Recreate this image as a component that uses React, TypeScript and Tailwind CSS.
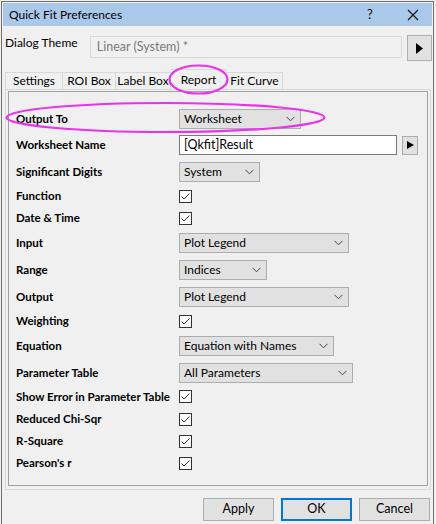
import React from "react";

const font = { fontFamily: 'Lato, "Noto Sans", sans-serif' };

function Chevron() {
  return (
    <svg width="9" height="6" viewBox="0 0 9 6" className="shrink-0">
      <path d="M0.5 0.8 L4.5 4.8 L8.5 0.8" fill="none" stroke="#444" strokeWidth="1" />
    </svg>
  );
}

function Combo({ w, text }: { w: string; text: string }) {
  return (
    <div className={`${w} h-[20px] flex items-center justify-between bg-[#e1e1e1] border border-[#adadad] pl-[4px] pr-[5px] text-[12px] text-black whitespace-nowrap`}>
      <span>{text}</span>
      <Chevron />
    </div>
  );
}

function Check() {
  return (
    <div className="w-[13px] h-[13px] bg-white border border-[#333] flex items-center justify-center">
      <svg width="11" height="11" viewBox="0 0 11 11">
        <path d="M1.5 5.5 L4 8 L9.5 2.5" fill="none" stroke="#333" strokeWidth="1" />
      </svg>
    </div>
  );
}

function Row({ h, label, children }: { h: string; label: string; children: React.ReactNode }) {
  return (
    <div className={`${h} flex items-center`}>
      <div className="w-[163px] shrink-0 font-bold text-[11.5px] text-black whitespace-nowrap">{label}</div>
      {children}
    </div>
  );
}

export default function App() {
  return (
    <div className="relative w-[436px] h-[524px] bg-[#f0f0f0] overflow-hidden" style={font}>
      <div className="ml-[1px] mt-[1px] w-[433px] h-[540px] border border-[#6f6f6f] p-[1px]">
        {/* title bar */}
        <div className="h-[23px] bg-[#aac8ea] flex items-center pl-[6px] text-[12px] text-black whitespace-nowrap">
          <span className="flex-1">Quick Fit Preferences</span>
          <span className="w-[14px] text-center mr-[30px] text-[13px]">?</span>
          <svg width="12" height="12" viewBox="0 0 12 12" className="mr-[13px]">
            <path d="M1 1 L11 11 M11 1 L1 11" stroke="#111" strokeWidth="1.1" />
          </svg>
        </div>
        {/* dialog theme */}
        <div className="flex items-start mt-[9px] pl-[2px]">
          <div className="w-[85px] text-[12px] text-black leading-[16px] whitespace-nowrap">Dialog Theme</div>
          <div className="w-[313px] h-[22px] mt-[1px] bg-[#f0f0f0] border border-[#d9d9d9] flex items-center pl-[6px] text-[12.5px] text-[#7a7a7a]">
            Linear (System) *
          </div>
          <div className="ml-[5px] w-[25px] h-[26px] bg-[#e1e1e1] border border-[#adadad] flex items-center justify-center">
            <svg width="7" height="11" viewBox="0 0 7 11"><path d="M0 0 L7 5.5 L0 11 Z" fill="#000" /></svg>
          </div>
        </div>
        {/* tabs */}
        <div className="mt-[8px] ml-[2px] flex items-end h-[20px] text-[12px] text-black whitespace-nowrap">
          <div className="w-[58px] h-[17px] border border-b-0 border-[#d9d9d9] flex items-center justify-center">Settings</div>
          <div className="w-[53px] h-[17px] border border-b-0 border-l-0 border-[#d9d9d9] flex items-center justify-center">ROI Box</div>
          <div className="w-[55px] h-[17px] border border-b-0 border-l-0 border-[#d9d9d9] flex items-center justify-center">Label Box</div>
          <div className="w-[56px] h-[20px] border border-b-0 border-l-0 border-[#d9d9d9] bg-[#f0f0f0] flex items-center justify-center">Report</div>
          <div className="w-[56px] h-[17px] border border-b-0 border-l-0 border-[#d9d9d9] flex items-center justify-center">Fit Curve</div>
        </div>
        {/* panel */}
        <div className="ml-[2px] w-[426px] h-[401px] border border-[#d9d9d9] pt-[1px] pl-[2px] pr-[2px] pb-[3px]">
          <div className="h-full border border-[#a0a0a0] pl-[7px] pt-[14px]">
            <Row h="h-[26px]" label="Output To"><Combo w="w-[122px]" text="Worksheet" /></Row>
            <Row h="h-[26px]" label="Worksheet Name">
              <div className="w-[218px] h-[20px] bg-white border border-[#7a7a7a] flex items-center pl-[4px] text-[12.5px]">[Qkfit]Result</div>
              <div className="ml-[5px] w-[16px] h-[19px] bg-[#e1e1e1] border border-[#adadad] flex items-center justify-center">
                <svg width="7" height="8" viewBox="0 0 7 8"><path d="M0 0 L7 4 L0 8 Z" fill="#000" /></svg>
              </div>
            </Row>
            <Row h="h-[27px]" label="Significant Digits"><Combo w="w-[81px]" text="System" /></Row>
            <Row h="h-[22px]" label="Function"><Check /></Row>
            <Row h="h-[22px]" label="Date &amp; Time"><Check /></Row>
            <Row h="h-[28px]" label="Input"><Combo w="w-[170px]" text="Plot Legend" /></Row>
            <Row h="h-[26px]" label="Range"><Combo w="w-[88px]" text="Indices" /></Row>
            <Row h="h-[28px]" label="Output"><Combo w="w-[170px]" text="Plot Legend" /></Row>
            <Row h="h-[20px]" label="Weighting"><Check /></Row>
            <Row h="h-[30px]" label="Equation"><Combo w="w-[155px]" text="Equation with Names" /></Row>
            <Row h="h-[24px]" label="Parameter Table"><Combo w="w-[174px]" text="All Parameters" /></Row>
            <Row h="h-[23px]" label="Show Error in Parameter Table"><Check /></Row>
            <Row h="h-[22px]" label="Reduced Chi-Sqr"><Check /></Row>
            <Row h="h-[22px]" label="R-Square"><Check /></Row>
            <Row h="h-[22px]" label="Pearson's r"><Check /></Row>
          </div>
        </div>
        {/* buttons */}
        <div className="mt-[8px] flex justify-end gap-[7px] pr-[2px] text-[12.5px] text-black">
          <div className="w-[71px] h-[23px] bg-[#e1e1e1] border border-[#adadad] flex items-center justify-center">Apply</div>
          <div className="w-[71px] h-[23px] bg-[#e1e1e1] border-2 border-[#0078d7] flex items-center justify-center">OK</div>
          <div className="w-[71px] h-[23px] bg-[#e1e1e1] border border-[#adadad] flex items-center justify-center">Cancel</div>
        </div>
      </div>
      {/* annotations */}
      <svg className="absolute left-0 top-0 pointer-events-none" width="436" height="524">
        <ellipse cx="198.5" cy="79.5" rx="29" ry="14" fill="none" stroke="#e932e9" strokeWidth="2.2" />
        <ellipse cx="165.5" cy="117.5" rx="159" ry="14.5" fill="none" stroke="#e932e9" strokeWidth="2.2" />
      </svg>
    </div>
  );
}
